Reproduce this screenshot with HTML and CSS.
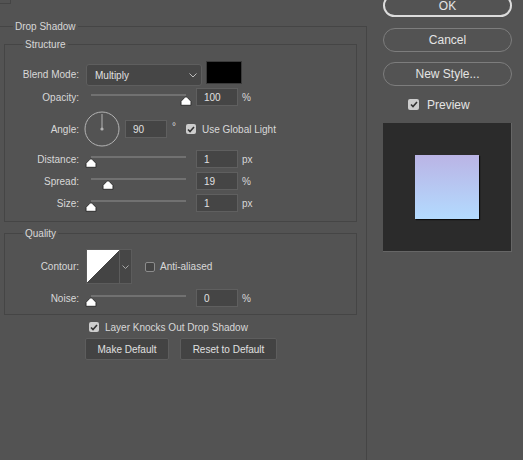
FILE: index.html
```html
<!DOCTYPE html>
<html lang="en">
<head>
  <meta charset="UTF-8">
  <meta name="viewport" content="width=device-width, initial-scale=1.0">
  <title>Layer Style - Drop Shadow</title>
  <link rel="stylesheet" href="styles.css">
</head>
<body>

  <div class="dialog">
    <div class="main">
      <div class="corner"></div>

      <fieldset class="group outer">
        <legend>Drop Shadow</legend>

        <fieldset class="group inner">
          <legend>Structure</legend>

          <div class="row blend-row">
            <label class="label" for="blendMode">Blend Mode:</label>
            <div class="select" id="blendMode">
              <span>Multiply</span>
              <svg class="chevron" width="8" height="5" viewBox="0 0 8 5"><polyline points="0.5,0.5 4,4 7.5,0.5" fill="none" stroke="#bdbdbd" stroke-width="1"/></svg>
            </div>
            <div class="color-swatch"></div>
          </div>

          <div class="row opacity-row">
            <label class="label" for="opacity">Opacity:</label>
            <div class="slider">
              <span class="thumb" style="left: 100%">
                <svg width="12" height="10" viewBox="0 0 12 10"><path d="M6 0.8 C6.4 0.8 6.8 1 7.1 1.3 L11 5.3 V9.3 H1 V5.3 L4.9 1.3 C5.2 1 5.6 0.8 6 0.8 Z" fill="#fff" stroke="#2e2e2e" stroke-width="1"/></svg>
              </span>
            </div>
            <input class="field" type="text" id="opacity" value="100">
            <span class="unit">%</span>
          </div>

          <div class="row angle-row">
            <label class="label" for="angle">Angle:</label>
            <svg class="dial" width="36" height="36" viewBox="0 0 36 36">
              <circle cx="18" cy="18" r="17" fill="none" stroke="#b4b4b4" stroke-width="1"/>
              <line x1="18" y1="18" x2="18" y2="3" stroke="#b4b4b4" stroke-width="1"/>
              <circle cx="18" cy="18" r="1.6" fill="#b4b4b4"/>
            </svg>
            <input class="field" type="text" id="angle" value="90">
            <span class="degree">°</span>
            <span class="check on">
              <svg width="8" height="7" viewBox="0 0 8 7"><polyline points="1,3.5 3,5.5 7,1" fill="none" stroke="#333" stroke-width="1.6"/></svg>
            </span>
            <span class="check-text">Use Global Light</span>
          </div>

          <div class="row distance-row">
            <label class="label" for="distance">Distance:</label>
            <div class="slider">
              <span class="thumb" style="left: 0%">
                <svg width="12" height="10" viewBox="0 0 12 10"><path d="M6 0.8 C6.4 0.8 6.8 1 7.1 1.3 L11 5.3 V9.3 H1 V5.3 L4.9 1.3 C5.2 1 5.6 0.8 6 0.8 Z" fill="#fff" stroke="#2e2e2e" stroke-width="1"/></svg>
              </span>
            </div>
            <input class="field" type="text" id="distance" value="1">
            <span class="unit">px</span>
          </div>

          <div class="row spread-row">
            <label class="label" for="spread">Spread:</label>
            <div class="slider">
              <span class="thumb" style="left: 18%">
                <svg width="12" height="10" viewBox="0 0 12 10"><path d="M6 0.8 C6.4 0.8 6.8 1 7.1 1.3 L11 5.3 V9.3 H1 V5.3 L4.9 1.3 C5.2 1 5.6 0.8 6 0.8 Z" fill="#fff" stroke="#2e2e2e" stroke-width="1"/></svg>
              </span>
            </div>
            <input class="field" type="text" id="spread" value="19">
            <span class="unit">%</span>
          </div>

          <div class="row size-row">
            <label class="label" for="size">Size:</label>
            <div class="slider">
              <span class="thumb" style="left: 0%">
                <svg width="12" height="10" viewBox="0 0 12 10"><path d="M6 0.8 C6.4 0.8 6.8 1 7.1 1.3 L11 5.3 V9.3 H1 V5.3 L4.9 1.3 C5.2 1 5.6 0.8 6 0.8 Z" fill="#fff" stroke="#2e2e2e" stroke-width="1"/></svg>
              </span>
            </div>
            <input class="field" type="text" id="size" value="1">
            <span class="unit">px</span>
          </div>
        </fieldset>

        <fieldset class="group inner quality">
          <legend>Quality</legend>

          <div class="row contour-row">
            <label class="label">Contour:</label>
            <div class="contour"></div>
            <div class="contour-drop">
              <svg width="7" height="4" viewBox="0 0 7 4"><polyline points="0.5,0.5 3.5,3.5 6.5,0.5" fill="none" stroke="#a8a8a8" stroke-width="1"/></svg>
            </div>
            <span class="check off"></span>
            <span class="check-text">Anti-aliased</span>
          </div>

          <div class="row noise-row">
            <label class="label" for="noise">Noise:</label>
            <div class="slider">
              <span class="thumb" style="left: 0%">
                <svg width="12" height="10" viewBox="0 0 12 10"><path d="M6 0.8 C6.4 0.8 6.8 1 7.1 1.3 L11 5.3 V9.3 H1 V5.3 L4.9 1.3 C5.2 1 5.6 0.8 6 0.8 Z" fill="#fff" stroke="#2e2e2e" stroke-width="1"/></svg>
              </span>
            </div>
            <input class="field" type="text" id="noise" value="0">
            <span class="unit">%</span>
          </div>
        </fieldset>

        <div class="row knock-row">
          <span class="check on">
            <svg width="8" height="7" viewBox="0 0 8 7"><polyline points="1,3.5 3,5.5 7,1" fill="none" stroke="#333" stroke-width="1.6"/></svg>
          </span>
          <span class="check-text">Layer Knocks Out Drop Shadow</span>
        </div>

        <div class="row default-row">
          <button class="btn make">Make Default</button>
          <button class="btn reset">Reset to Default</button>
        </div>
      </fieldset>
    </div>

    <div class="side">
      <button class="pill ok">OK</button>
      <button class="pill cancel">Cancel</button>
      <button class="pill">New Style...</button>

      <div class="preview-toggle">
        <span class="check on big">
          <svg width="8" height="7" viewBox="0 0 8 7"><polyline points="1,3.5 3,5.5 7,1" fill="none" stroke="#333" stroke-width="1.6"/></svg>
        </span>
        <span class="preview-text">Preview</span>
      </div>

      <div class="preview">
        <div class="preview-square"></div>
      </div>
    </div>
  </div>

</body>
</html>
```

FILE: styles.css
```css
body {
  margin: 0;
  background-color: #535353;
  font-family: "Liberation Sans", Arial, sans-serif;
  font-size: 10px;
  color: #d8d8d8;
  overflow: hidden;
}

.dialog {
  display: flex;
  align-items: flex-start;
  height: 460px;
}

.main {
  width: 367px;
  height: 100%;
  flex: none;
  display: flex;
  flex-direction: column;
}

.corner {
  width: 10px;
  height: 3px;
  border-right: 1px solid #454545;
  border-bottom: 1px solid #454545;
}

/* fieldsets */
.group {
  border: 1px solid #454545;
  margin: 0;
  padding: 0;
  min-width: 0;
}

.group > legend {
  padding: 0 2px;
  height: 13px;
  line-height: 13px;
}

.outer {
  flex: 1;
  width: 369px;
  box-sizing: border-box;
  margin: 16px 0 0 -2px;
  padding: 5px 9px 0 5px;
  border-bottom: none;
}

.outer > legend {
  margin-left: 9px;
}

.inner {
  padding: 10px 0 9px 0;
}

.inner > legend {
  margin-left: 18px;
}

.quality {
  margin-top: 5px;
  padding: 9px 0 7px 0;
}

/* rows */
.row {
  display: flex;
  align-items: center;
}

.label {
  width: 74px;
  padding-right: 1px;
  text-align: right;
  flex: none;
}

.blend-row {
  height: 25px;
  align-items: flex-end;
}

.blend-row .label {
  line-height: 22px;
}

.opacity-row { margin-top: 2px; }
.angle-row { margin-top: 5px; height: 36px; }
.distance-row { margin-top: 3px; }
.spread-row { margin-top: 4px; }
.size-row { margin-top: 4px; }
.noise-row { margin-top: 5px; }

.select {
  width: 116px;
  height: 22px;
  box-sizing: border-box;
  margin-left: 6px;
  padding: 0 4px 0 8px;
  background-color: #464646;
  border: 1px solid #5e5e5e;
  border-radius: 3px;
  display: flex;
  align-items: center;
  justify-content: space-between;
  color: #e0e0e0;
}

.color-swatch {
  width: 36px;
  height: 23px;
  box-sizing: border-box;
  margin-left: 4px;
  align-self: flex-start;
  background-color: #000;
  border: 1px solid #3a3a3a;
}

/* sliders */
.slider {
  position: relative;
  width: 95px;
  height: 18px;
  margin: 0 10px 0 11px;
  flex: none;
}

.slider::before {
  content: "";
  position: absolute;
  left: 0;
  right: 0;
  top: 6px;
  height: 2px;
  background-color: #717171;
}

.thumb {
  position: absolute;
  top: 8px;
  width: 12px;
  height: 10px;
  transform: translateX(-50%);
}

.thumb svg {
  display: block;
}

.field {
  width: 42px;
  height: 18px;
  box-sizing: border-box;
  padding: 0 0 0 7px;
  background-color: #454545;
  border: 1px solid #5f5f5f;
  color: #e0e0e0;
  font: inherit;
  outline: none;
}

.unit {
  margin-left: 4px;
}

/* angle */
.dial {
  margin-left: 4px;
  flex: none;
}

.angle-row .field {
  margin-left: 5px;
}

.degree {
  margin-left: 5px;
  margin-top: -5px;
}

/* checkboxes */
.check {
  width: 10px;
  height: 10px;
  box-sizing: border-box;
  border-radius: 2px;
  display: inline-flex;
  align-items: center;
  justify-content: center;
  flex: none;
}

.check.on {
  background-color: #cdcdcd;
}

.check.off {
  background-color: #454545;
  border: 1px solid #8c8c8c;
}

.check.big {
  width: 11px;
  height: 11px;
}

.angle-row .check {
  margin-left: 10px;
}

.check-text {
  margin-left: 6px;
}

/* contour */
.contour-row {
  height: 35px;
}

.contour {
  width: 34px;
  height: 35px;
  box-sizing: border-box;
  margin-left: 6px;
  border: 1px solid #5c5c5c;
  background: linear-gradient(to bottom right, #fff 50%, #444 50%);
}

.contour-drop {
  width: 12px;
  height: 35px;
  box-sizing: border-box;
  border: 1px solid #5c5c5c;
  border-left: none;
  background-color: #464646;
  display: flex;
  align-items: center;
  justify-content: center;
}

.contour-row .check {
  margin-left: 13px;
}

.contour-row .check-text {
  margin-left: 5px;
}

/* bottom of the panel */
.knock-row {
  margin: 7px 0 0 85px;
  height: 10px;
}

.default-row {
  margin: 6px 0 0 81px;
}

.btn {
  height: 22px;
  box-sizing: border-box;
  padding: 0;
  background-color: #434343;
  border: 1px solid #5d5d5d;
  border-radius: 2px;
  color: #e0e0e0;
  font: inherit;
}

.make { width: 84px; }
.reset { width: 97px; margin-left: 11px; }

/* right column */
.side {
  width: 129px;
  margin-left: 16px;
  flex: none;
  display: flex;
  flex-direction: column;
}

.pill {
  height: 24px;
  box-sizing: border-box;
  margin-top: 10px;
  padding: 0;
  background: transparent;
  border: 1px solid #7d7d7d;
  border-radius: 12px;
  color: #e4e4e4;
  font-family: "Liberation Sans", Arial, sans-serif;
  font-size: 12px;
}

.pill.ok {
  height: 23px;
  margin-top: -6px;
  padding-top: 1px;
  border: 2px solid #dcdcdc;
}

.pill.cancel {
  margin-top: 11px;
}

.preview-toggle {
  display: flex;
  align-items: center;
  height: 11px;
  margin-top: 13px;
  padding-left: 25px;
  font-size: 12px;
  color: #e4e4e4;
}

.preview-text {
  margin-left: 8px;
}

.preview {
  height: 129px;
  box-sizing: border-box;
  margin-top: 13px;
  background-color: #2b2b2b;
  border-right: 1px solid #666;
  border-bottom: 1px solid #666;
  display: flex;
  align-items: center;
  justify-content: center;
}

.preview-square {
  width: 64px;
  height: 64px;
  background: linear-gradient(#bab4e5, #b3dbff);
  box-shadow: 1px 1px 1px rgba(0, 0, 0, 0.7);
}
```
